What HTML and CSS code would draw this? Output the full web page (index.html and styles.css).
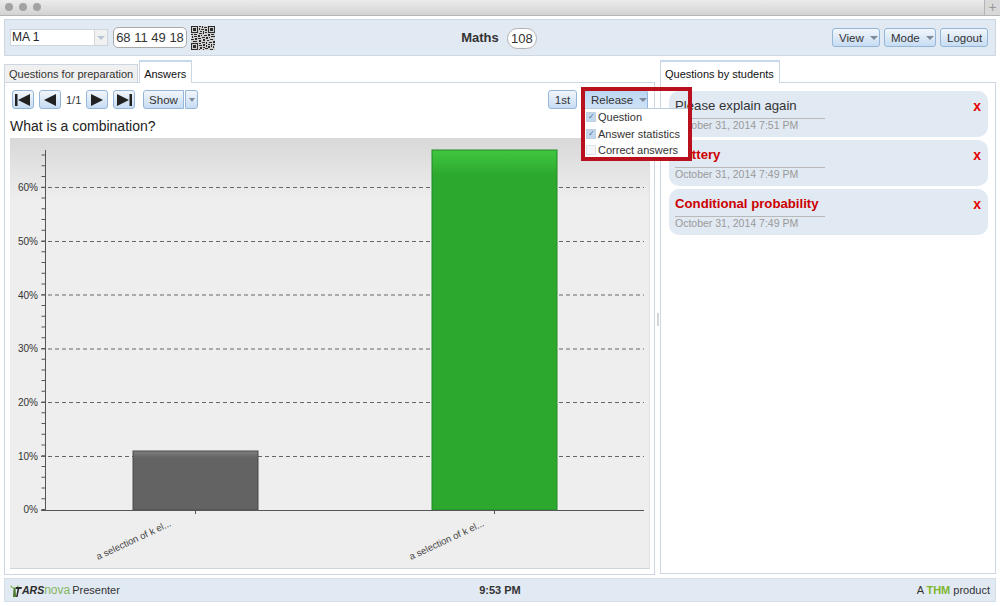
FILE: index.html
```html
<!DOCTYPE html>
<html>
  <head>
    <meta charset="utf-8" />
    <title>ARSnova Presenter</title>
    <link rel="stylesheet" href="styles.css">
  </head>
  <body>
    <div class="titlebar">
      <div class="lights"><i></i><i></i><i></i></div>
      <div class="plus">+</div>
    </div>

    <div class="topbar">
      <div class="top-left">
        <div class="select"><span class="select-text">MA 1</span><span class="select-arrow"><b class="caret"></b></span></div>
        <div class="code">68 11 49 18</div>
        <svg class="qr" width="24" height="24" viewBox="0 0 24 24" shape-rendering="crispEdges">
          <path fill="#d0d0d0" d="M0 0h24v24H0z"/>
          <path fill="#2b2b2b" d="M0 0h7v7H0zM17 0h7v7h-7zM0 17h7v7H0zM8 0h2v1H8zM11 0h1v2h-1zM13 1h3v1h-3zM8 2h1v2H8zM10 3h3v1h-3zM14 3h2v2h-2zM9 5h2v1H9zM12 5h1v3h-1zM8 7h3v1H8zM14 6h2v1h-2zM0 8h2v1H0zM3 8h3v1H3zM7 9h2v2H7zM10 9h1v1h-1zM13 9h3v1h-3zM17 8h2v2h-2zM20 8h3v1h-3zM1 10h1v2H1zM3 10h3v1H3zM11 11h3v1h-3zM15 11h2v2h-2zM18 11h1v1h-1zM20 10h4v1h-4zM0 13h3v1H0zM4 12h2v2H4zM7 12h3v1H7zM12 13h2v2h-2zM19 13h3v1h-3zM2 15h4v1H2zM8 14h2v2H8zM16 14h2v1h-2zM22 15h2v2h-2zM11 16h3v1h-3zM15 16h1v2h-1zM18 16h3v1h-3zM8 17h2v1H8zM12 18h2v2h-2zM17 18h2v1h-2zM20 18h1v3h-1zM22 18h2v1h-2zM8 19h3v1H8zM15 19h1v2h-1zM17 20h2v2h-2zM22 20h1v2h-1zM9 21h2v2H9zM12 21h2v1h-2zM14 22h3v1h-3zM19 23h3v1h-3zM8 23h1v1H8zM12 23h1v1h-1z"/>
          <path fill="#d0d0d0" d="M1 1h5v5H1zM18 1h5v5h-5zM1 18h5v5H1z"/>
          <path fill="#2b2b2b" d="M2 2h3v3H2zM19 2h3v3h-3zM2 19h3v3H2z"/>
        </svg>
      </div>
      <div class="top-center"><span class="session-name">Maths</span><span class="badge">108</span></div>
      <div class="top-right">
        <button class="btn btn-top">View <b class="caret"></b></button>
        <button class="btn btn-top">Mode <b class="caret"></b></button>
        <button class="btn btn-top">Logout</button>
      </div>
    </div>

    <div class="main">
      <div class="col col-left">
        <div class="tabs">
          <div class="tab">Questions for preparation</div>
          <div class="tab tab-on">Answers</div>
        </div>
        <div class="panel panel-left">
          <div class="tools">
            <div class="tools-nav">
              <button class="btn btn-nav"><svg width="16" height="12" viewBox="0 0 16 12"><path fill="#222" d="M0 0h2.500v12H0zM15 0v12L3 6z"/></svg></button>
              <button class="btn btn-nav"><svg width="14" height="12" viewBox="0 0 14 12"><path fill="#222" d="M13 0v12L1 6z"/></svg></button>
              <span class="pager">1/1</span>
              <button class="btn btn-nav"><svg width="14" height="12" viewBox="0 0 14 12"><path fill="#222" d="M1 0v12l12-6z"/></svg></button>
              <button class="btn btn-nav"><svg width="16" height="12" viewBox="0 0 16 12"><path fill="#222" d="M13.500 0H16v12h-2.500zM1 0v12l12-6z"/></svg></button>
              <div class="split">
                <button class="btn btn-show">Show</button>
                <button class="btn btn-drop"><b class="caret"></b></button>
              </div>
            </div>
            <div class="tools-release">
              <button class="btn btn-first">1st</button>
              <div class="release">
                <button class="btn btn-release">Release <b class="caret"></b></button>
                <div class="menu">
                  <div class="menu-item"><span class="check on">&#10003;</span>Question</div>
                  <div class="menu-item"><span class="check on">&#10003;</span>Answer statistics</div>
                  <div class="menu-item"><span class="check"></span>Correct answers</div>
                </div>
                <div class="highlight"></div>
              </div>
            </div>
          </div>
          <div class="question">What is a combination?</div>
          <div class="chart">
            <svg class="chart-svg" width="640" height="430" viewBox="10 138 640 430">
              <defs>
                <linearGradient id="barGrey" x1="0" y1="0" x2="0" y2="1">
                  <stop offset="0" stop-color="#808080"/>
                  <stop offset="0.12" stop-color="#636363"/>
                </linearGradient>
                <linearGradient id="barGreen" x1="0" y1="0" x2="0" y2="1">
                  <stop offset="0" stop-color="#41c741"/>
                  <stop offset="0.07" stop-color="#2ca82e"/>
                </linearGradient>
              </defs>
              <g class="grid">
                <line x1="41" x2="644" y1="456.500" y2="456.500"/>
                <line x1="41" x2="644" y1="402.500" y2="402.500"/>
                <line x1="41" x2="644" y1="349" y2="349"/>
                <line x1="41" x2="644" y1="295" y2="295"/>
                <line x1="41" x2="644" y1="241.500" y2="241.500"/>
                <line x1="41" x2="644" y1="187.500" y2="187.500"/>
              </g>
              <rect x="133" y="451" width="125" height="59" fill="url(#barGrey)" stroke="#4b4b4b"/>
              <rect x="432" y="150" width="125" height="360" fill="url(#barGreen)" stroke="#1f8a26"/>
              <line class="axis-ticks" x1="43.500" x2="43.500" y1="510" y2="150"/>
              <line class="axis" x1="45.500" x2="45.500" y1="150" y2="510"/>
              <line class="axis" x1="41" x2="644" y1="510.500" y2="510.500"/>
              <line class="axis" x1="195.500" x2="195.500" y1="510" y2="514"/>
              <line class="axis" x1="494.500" x2="494.500" y1="510" y2="514"/>
              <g class="y-labels">
                <text x="38" y="513">0%</text>
                <text x="38" y="460">10%</text>
                <text x="38" y="406">20%</text>
                <text x="38" y="352">30%</text>
                <text x="38" y="299">40%</text>
                <text x="38" y="245">50%</text>
                <text x="38" y="191">60%</text>
              </g>
              <text class="x-label" transform="translate(98 560) rotate(-25)">a selection of k el...</text>
              <text class="x-label" transform="translate(411 560) rotate(-25)">a selection of k el...</text>
            </svg>
          </div>
        </div>
      </div>

      <div class="splitter"><i></i></div>

      <div class="col col-right">
        <div class="tabs">
          <div class="tab tab-on">Questions by students</div>
        </div>
        <div class="panel panel-right">
          <div class="card">
            <div class="card-title">Please explain again</div>
            <div class="card-date">October 31, 2014 7:51 PM</div>
            <span class="card-del">x</span>
          </div>
          <div class="card">
            <div class="card-title unread">Battery</div>
            <div class="card-date">October 31, 2014 7:49 PM</div>
            <span class="card-del">x</span>
          </div>
          <div class="card">
            <div class="card-title unread">Conditional probability</div>
            <div class="card-date">October 31, 2014 7:49 PM</div>
            <span class="card-del">x</span>
          </div>
        </div>
      </div>
    </div>

    <div class="footer">
      <div class="foot-left">
        <span class="logo"><svg class="logo-mark" width="12" height="13" viewBox="0 0 12 13"><path fill="none" stroke="#7ab648" stroke-width="1.200" d="M1 1.500q0 2.500 3.500 2.500T8 1.500"/><path fill="#4c7a2a" d="M3.600 4h1.800l.6 9H3z"/><path fill="#2c2c2c" d="M6 3h6l-.5 2H9.200l-1.600 8H6l1.500-8H5.500z"/></svg><span class="logo-ars">ARS</span><span class="logo-nova">nova</span></span>
        Presenter
      </div>
      <div class="foot-center">9:53 PM</div>
      <div class="foot-right">A <b class="thm">THM</b> product</div>
    </div>
  </body>
</html>
```
FILE: styles.css
```css
* {
  margin: 0;
  padding: 0;
  box-sizing: border-box;
}
body {
  width: 1000px;
  height: 606px;
  overflow: hidden;
  background: #ffffff;
  color: #333333;
  font-family: "Liberation Sans", Arial, sans-serif;
  font-size: 12px;
}

/* window title bar */
.titlebar {
  display: flex;
  justify-content: space-between;
  height: 16px;
  background: linear-gradient(#ececec, #d2d2d2);
  border-bottom: 1px solid #b5b5b5;
}
.lights {
  display: flex;
  gap: 6px;
  padding: 3px 0 0 5px;
}
.lights i {
  width: 8px;
  height: 8px;
  border-radius: 50%;
  background: #a3a3a3;
}
.plus {
  width: 16px;
  border-left: 1px solid #b5b5b5;
  background: #d9d9d9;
  color: #999999;
  font-size: 14px;
  line-height: 14px;
  text-align: center;
}

/* session bar */
.topbar {
  display: grid;
  grid-template-columns: 1fr auto 1fr;
  align-items: center;
  height: 37px;
  margin: 3px 4px 0;
  padding: 0 7px 0 5px;
  background: #e1e9f3;
  border: 1px solid #cdd7e4;
}
.top-left {
  display: flex;
  align-items: center;
}
.select {
  display: flex;
  width: 98px;
  height: 17px;
  background: #ffffff;
  border: 1px solid #cdd5df;
  line-height: 15px;
  color: #222222;
}
.select-text {
  flex: 1;
  padding-left: 1px;
}
.select-arrow {
  display: flex;
  align-items: center;
  justify-content: center;
  width: 13px;
  background: #f1f1f1;
  border-left: 1px solid #d8d8d8;
}
.select-arrow .caret {
  margin: 0;
  border-top-color: #b9c6d6;
}
.code {
  width: 74px;
  height: 21px;
  margin: 0 4px 0 5px;
  background: #ffffff;
  border: 1px solid #a9a9a9;
  border-radius: 5px;
  font-size: 13px;
  line-height: 19px;
  text-align: center;
  white-space: nowrap;
}
.top-center {
  display: flex;
  align-items: center;
  gap: 8px;
}
.session-name {
  font-size: 13px;
  font-weight: bold;
}
.badge {
  width: 30px;
  height: 21px;
  margin-top: 2px;
  background: #ffffff;
  border: 1px solid #b0b0b0;
  border-radius: 11px;
  font-size: 13px;
  line-height: 20px;
  text-align: center;
}
.top-right {
  display: flex;
  justify-content: flex-end;
  gap: 4px;
}

/* buttons */
.btn {
  height: 19px;
  background: linear-gradient(#f2f6fb, #c7dcf3);
  border: 1px solid #94b6d8;
  border-radius: 3px;
  color: #333333;
  font-family: inherit;
  font-size: 11.500px;
  line-height: 16px;
  white-space: nowrap;
}
.caret {
  display: inline-block;
  width: 0;
  height: 0;
  margin: 0 0 2px 3px;
  border-top: 4px solid #7d8b9c;
  border-left: 4px solid transparent;
  border-right: 4px solid transparent;
}
.btn-top {
  padding: 0 6px;
}
.btn-top:nth-child(1) {
  width: 48px;
}
.btn-top:nth-child(2) {
  width: 52px;
}
.btn-top:nth-child(3) {
  width: 48px;
}

/* main columns */
.main {
  display: flex;
  height: 514px;
  margin: 4px 4px 0;
}
.col {
  display: flex;
  flex-direction: column;
}
.col-left {
  width: 651px;
}
.col-right {
  width: 336px;
}
.splitter {
  display: flex;
  align-items: center;
  justify-content: center;
  width: 5px;
  padding-top: 5px;
}
.splitter i {
  width: 2px;
  height: 13px;
  background: #d5d5d5;
}
.tabs {
  display: flex;
  align-items: flex-end;
  height: 23px;
  margin-bottom: -1px;
}
.tab {
  height: 19px;
  margin-right: 1px;
  padding: 0 4px;
  background: #f0f0f0;
  border: 1px solid #cdd7e4;
  border-bottom: none;
  font-size: 11px;
  line-height: 18px;
}
.tab-on {
  position: relative;
  height: 23px;
  padding: 3px 5px 0 4px;
  background: #ffffff;
  border-top: 2px solid #c5d8ee;
  line-height: 18px;
  color: #111111;
}
.panel {
  flex: 1;
  background: #ffffff;
  border: 1px solid #cdd7e4;
}

/* left panel */
.panel-left {
  display: flex;
  flex-direction: column;
  padding: 7px 5px 5px;
}
.tools {
  display: flex;
  justify-content: space-between;
  height: 19px;
  padding-left: 2px;
}
.tools-nav {
  display: flex;
  align-items: center;
  gap: 5px;
}
.btn-nav {
  display: flex;
  align-items: center;
  justify-content: center;
  width: 22px;
}
.pager {
  width: 15px;
  font-size: 11px;
  text-align: center;
}
.split {
  display: flex;
  gap: 1px;
  margin-left: 3px;
}
.btn-show {
  width: 41px;
  border-radius: 3px 0 0 3px;
}
.btn-drop {
  width: 13px;
  border-radius: 0 3px 3px 0;
}
.btn-drop .caret {
  margin: 0 0 2px 0;
  border-width: 4px 3px 0;
}
.tools-release {
  display: flex;
  gap: 7px;
  padding-right: 1px;
}
.btn-first {
  width: 29px;
}
.release {
  position: relative;
}
.btn-release {
  width: 64px;
  padding-left: 6px;
  background: linear-gradient(#bcd6f2, #cfe2f6);
  border-radius: 3px 3px 0 0;
  text-align: left;
}
.menu {
  position: absolute;
  z-index: 2;
  left: 0;
  top: 18px;
  width: 106px;
  height: 52px;
  background: #ffffff;
  border-top: 1px solid #b8cce0;
}
.menu-item {
  display: flex;
  align-items: center;
  height: 16.500px;
  font-size: 11px;
  white-space: nowrap;
}
.check {
  width: 10px;
  height: 10px;
  margin: 0 2px 0 2px;
  background: #f4f6f9;
  border: 1px solid #dfe4ea;
  font-size: 8px;
  line-height: 8px;
  text-align: center;
}
.check.on {
  background: #c3d7ec;
  border-color: #bfcfe0;
  color: #456f9c;
}
.highlight {
  position: absolute;
  z-index: 3;
  left: -3px;
  top: -3px;
  width: 111px;
  height: 74px;
  border: 4px solid #b8101c;
  pointer-events: none;
}
.question {
  height: 29px;
  padding: 9px 0 0 0;
  font-size: 14px;
  line-height: 17px;
  color: #222222;
}
.chart {
  flex: 1;
  margin-right: -1px;
  overflow: hidden;
  background: linear-gradient(#d8d8d8, #eeeeee 62px);
  border-bottom: 1px solid #cfd6d9;
  border-right: 1px solid #dfe2e4;
}
.chart-svg {
  display: block;
}
.grid line {
  stroke: #666666;
  stroke-dasharray: 4 3;
}
.axis {
  stroke: #555555;
}
.axis-ticks {
  stroke: #555555;
  stroke-width: 4;
  stroke-dasharray: 1 9.740;
}
.y-labels text {
  fill: #333333;
  font-size: 10px;
  text-anchor: end;
}
.x-label {
  fill: #444444;
  font-size: 9.500px;
}

/* right panel */
.panel-right {
  display: flex;
  flex-direction: column;
  gap: 3px;
  padding: 8px 7px 0 8px;
}
.card {
  position: relative;
  height: 46px;
  padding: 6px 6px 0;
  background: #e1e9f3;
  border-radius: 10px;
}
.card-title {
  width: 150px;
  height: 22px;
  border-bottom: 1px solid #b9b9b9;
  font-size: 13.200px;
  line-height: 17px;
  white-space: nowrap;
}
.unread {
  color: #cc0000;
  font-weight: bold;
}
.card-date {
  font-size: 10.500px;
  line-height: 12px;
  color: #999999;
}
.card-del {
  position: absolute;
  right: 7px;
  top: 7px;
  color: #e60000;
  font-size: 14px;
  font-weight: bold;
  line-height: 17px;
}

/* footer */
.footer {
  display: grid;
  grid-template-columns: 1fr auto 1fr;
  align-items: center;
  height: 24px;
  margin: 4px 4px 0;
  padding: 0 5px;
  background: #e1e9f3;
  border: 1px solid #d5dde7;
  font-size: 11px;
}
.foot-left {
  display: flex;
  align-items: center;
  gap: 2px;
}
.logo {
  display: flex;
  align-items: center;
  line-height: 14px;
}
.logo-ars {
  color: #2c2c2c;
  font-size: 10.500px;
  font-style: italic;
  font-weight: bold;
}
.logo-nova {
  color: #86b562;
  font-size: 12px;
}
.foot-center {
  font-weight: bold;
}
.foot-right {
  text-align: right;
}
.thm {
  color: #7fb62e;
}
```
